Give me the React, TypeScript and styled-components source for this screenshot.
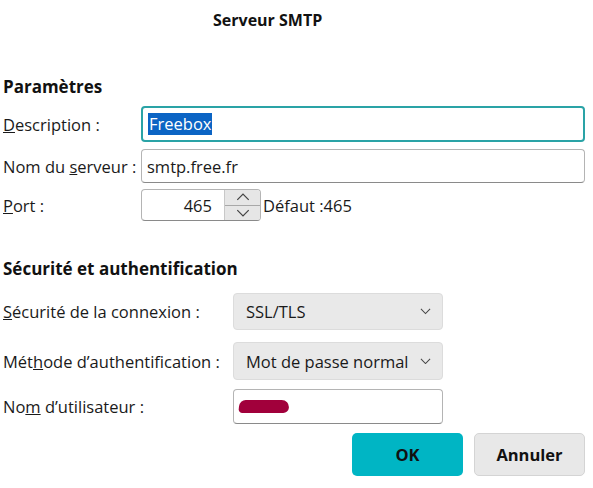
import React from 'react';
import styled, { createGlobalStyle } from 'styled-components';

const GlobalStyle = createGlobalStyle`
  html, body {
    margin: 0;
    padding: 0;
    background: #ffffff;
  }
  body {
    font-family: "Open Sans", "Noto Sans", "Liberation Sans", sans-serif;
    color: #1a1a1a;
  }
`;

const Dialog = styled.div`
  width: 593px;
  height: 488px;
  box-sizing: border-box;
  padding: 0 8px 0 3px;
  display: flex;
  flex-direction: column;
  overflow: hidden;
`;

const Title = styled.h1`
  margin: 10px 0 0 210px;
  font-size: 16px;
  font-weight: 700;
  line-height: 21px;
  color: #111;
`;

const SectionTitle = styled.h2<{ top: number }>`
  margin: ${(p) => p.top}px 0 0 0;
  font-size: 17px;
  font-weight: 700;
  line-height: 22px;
  color: #111;
`;

const Rows = styled.div`
  display: flex;
  flex-direction: column;
`;

const Row = styled.div<{ gap: number; labelWidth: number }>`
  display: flex;
  align-items: center;
  margin-top: ${(p) => p.gap}px;

  & > label {
    width: ${(p) => p.labelWidth}px;
    flex: none;
  }
`;

const Label = styled.label`
  font-size: 16.5px;
  color: #1a1a1a;
  white-space: nowrap;
`;

const TextBox = styled.div<{ focused?: boolean; height: number }>`
  box-sizing: border-box;
  flex: 1;
  height: ${(p) => p.height}px;
  display: flex;
  align-items: center;
  padding: 0 5px;
  border: ${(p) => (p.focused ? '2px solid #2aa3a6' : '1px solid #b4b4b4')};
  border-bottom-color: ${(p) => (p.focused ? '#2aa3a6' : '#8a8a8a')};
  border-radius: 4px;
  background: #fff;
  font-size: 16.5px;
  color: #1a1a1a;
`;

const Selected = styled.span`
  background: #0b64c4;
  color: #fff;
  line-height: 22px;
  padding: 0 1px;
`;

const PortRow = styled.div`
  display: flex;
  align-items: center;
`;

const PortBox = styled.div`
  box-sizing: border-box;
  width: 120px;
  height: 32px;
  display: flex;
  border: 1px solid #b4b4b4;
  border-bottom-color: #8a8a8a;
  border-radius: 4px;
  overflow: hidden;
`;

const PortValue = styled.div`
  flex: 1;
  display: flex;
  align-items: center;
  justify-content: flex-end;
  padding-right: 12px;
  font-size: 16.5px;
`;

const Spinner = styled.div`
  width: 35px;
  display: flex;
  flex-direction: column;
  background: #e6e6e6;
  border-left: 1px solid #c8c8c8;
`;

const SpinHalf = styled.div<{ divider?: boolean }>`
  flex: 1;
  display: flex;
  align-items: center;
  justify-content: center;
  border-bottom: ${(p) => (p.divider ? '1px solid #a8a8a8' : 'none')};
`;

const Hint = styled.span`
  margin-left: 2px;
  font-size: 16.5px;
`;

const Field = styled.div`
  width: 210px;
  display: flex;
`;

const Select = styled.div<{ height: number }>`
  box-sizing: border-box;
  width: 210px;
  height: ${(p) => p.height}px;
  display: flex;
  align-items: center;
  justify-content: space-between;
  padding: 0 11px 0 12px;
  background: #e9e9e9;
  border: 1px solid #dcdcdc;
  border-radius: 4px;
  font-size: 16.5px;
  color: #1a1a1a;
  white-space: nowrap;
`;

const Redacted = styled.span`
  display: block;
  width: 50px;
  height: 13px;
  background: #a1003b;
  border-radius: 6px 8px 5px 4px;
  transform: skewX(-6deg);
`;

const Buttons = styled.div`
  display: flex;
  justify-content: flex-end;
  gap: 11px;
  margin-top: 9px;
`;

const Button = styled.button<{ primary?: boolean }>`
  box-sizing: border-box;
  width: 111px;
  height: 43px;
  border-radius: 5px;
  font-family: inherit;
  font-size: 16.5px;
  font-weight: 700;
  color: #111;
  cursor: pointer;
  border: ${(p) => (p.primary ? 'none' : '1px solid #d4d4d4')};
  background: ${(p) => (p.primary ? '#00b5c4' : '#e8e8e8')};
`;

const Chevron = ({ up, size = 12 }: { up?: boolean; size?: number }) => (
  <svg width={size} height={size / 2 + 1} viewBox="0 0 12 7" fill="none">
    <path
      d={up ? 'M1 6 L6 1 L11 6' : 'M1 1 L6 6 L11 1'}
      stroke="#444"
      strokeWidth="1.1"
    />
  </svg>
);

const App = () => {
  return (
    <>
      <GlobalStyle />
      <Dialog>
        <Title>Serveur SMTP</Title>

        <SectionTitle top={45}>Paramètres</SectionTitle>
        <Rows>
          <Row gap={8} labelWidth={138}>
            <Label><u>D</u>escription :</Label>
            <TextBox focused height={36}>
              <Selected>Freebox</Selected>
            </TextBox>
          </Row>
          <Row gap={7} labelWidth={138}>
            <Label>Nom du <u>s</u>erveur :</Label>
            <TextBox height={34}>smtp.free.fr</TextBox>
          </Row>
          <Row gap={6} labelWidth={138}>
            <Label><u>P</u>ort :</Label>
            <PortRow>
              <PortBox>
                <PortValue>465</PortValue>
                <Spinner>
                  <SpinHalf divider>
                    <Chevron up size={14} />
                  </SpinHalf>
                  <SpinHalf>
                    <Chevron size={14} />
                  </SpinHalf>
                </Spinner>
              </PortBox>
              <Hint>Défaut :465</Hint>
            </PortRow>
          </Row>
        </Rows>

        <SectionTitle top={37}>Sécurité et authentification</SectionTitle>
        <Rows>
          <Row gap={13} labelWidth={230}>
            <Label><u>S</u>écurité de la connexion :</Label>
            <Select height={37}>
              SSL/TLS
              <Chevron size={11} />
            </Select>
          </Row>
          <Row gap={12} labelWidth={230}>
            <Label>Mét<u>h</u>ode d’authentification :</Label>
            <Select height={38}>
              Mot de passe normal
              <Chevron size={11} />
            </Select>
          </Row>
          <Row gap={9} labelWidth={230}>
            <Label>No<u>m</u> d’utilisateur :</Label>
            <Field>
              <TextBox height={35}>
                <Redacted />
              </TextBox>
            </Field>
          </Row>
        </Rows>

        <Buttons>
          <Button primary>OK</Button>
          <Button>Annuler</Button>
        </Buttons>
      </Dialog>
    </>
  );
};

export default App;
